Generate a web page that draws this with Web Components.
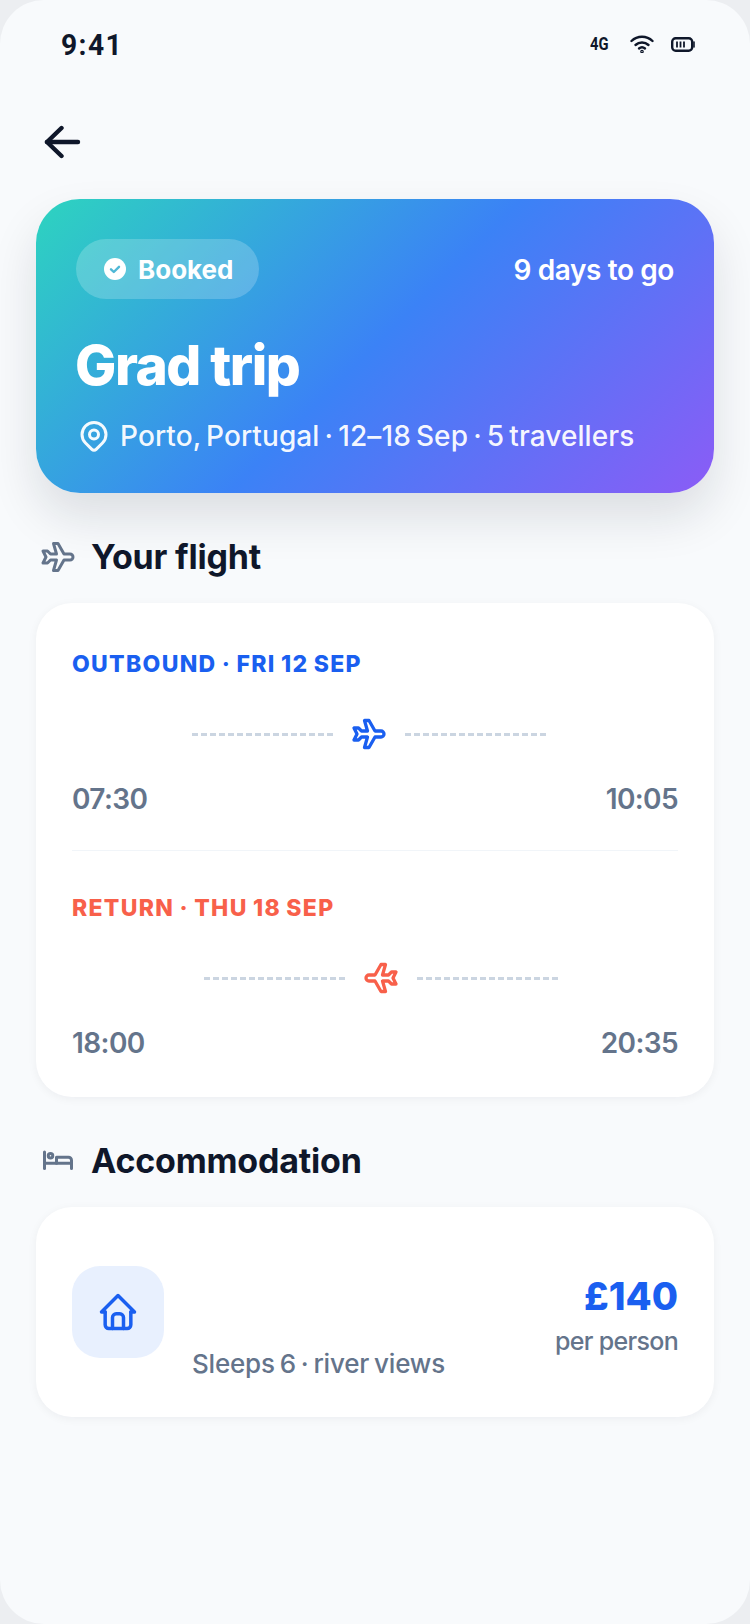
<!DOCTYPE html>
<html lang="en">
<head>
<meta charset="utf-8">
<title>Grad trip</title>
<style>
  html, body { margin: 0; padding: 0; background: #eceef1; }
  body { font-family: Inter, "Liberation Sans", sans-serif; }
</style>
</head>
<body>
<trip-screen>
  <status-bar></status-bar>
  <back-row></back-row>
  <trip-hero status="Booked" countdown="9 days to go" name="Grad trip" meta="Porto, Portugal · 12–18 Sep · 5 travellers"></trip-hero>
  <section-title icon="plane">Your flight</section-title>
  <flight-card>
    <flight-leg tone="out" label="OUTBOUND · FRI 12 SEP" dep="07:30" arr="10:05"></flight-leg>
    <flight-leg tone="ret" label="RETURN · THU 18 SEP" dep="18:00" arr="20:35"></flight-leg>
  </flight-card>
  <section-title icon="bed">Accommodation</section-title>
  <stay-card detail="Sleeps 6 · river views" price="£140" unit="per person"></stay-card>
</trip-screen>

<script>
const ICONS = {
  plane: '<path d="M16 10h4a2 2 0 0 1 0 4h-4l-4 7h-3l2 -7h-4l-2 2h-3l2 -4l-2 -4h3l2 2h4l-2 -7h3z"/>',
  bed: '<path d="M3 6v11"/><path d="M3 13.500h18"/><path d="M21 17v-5.500a2 2 0 0 0 -2 -2h-8v4"/><circle cx="7" cy="8.500" r="1.500"/>',
  home: '<path d="M5 12h-2l9 -9l9 9h-2"/><path d="M5 12v7a2 2 0 0 0 2 2h10a2 2 0 0 0 2 -2v-7"/><path d="M9 21v-6a2 2 0 0 1 2 -2h2a2 2 0 0 1 2 2v6"/>',
  pin: '<circle cx="12" cy="11" r="3"/><path d="M17.66 16.66l-4.24 4.24a2 2 0 0 1 -2.83 0l-4.24 -4.24a8 8 0 1 1 11.31 0z"/>',
};

function icon(name, size, stroke) {
  return `<svg width="${size}" height="${size}" viewBox="0 0 24 24" fill="none" stroke="currentColor" stroke-width="${stroke}" stroke-linecap="round" stroke-linejoin="round">${ICONS[name]}</svg>`;
}

class TripScreen extends HTMLElement {
  connectedCallback() {
    if (this.shadowRoot) return;
    this.attachShadow({ mode: 'open' });
    this.shadowRoot.innerHTML = `
      <style>
        :host {
          display: flex; flex-direction: column;
          width: 750px; height: 1624px; box-sizing: border-box;
          padding: 0 36px;
          background: #f8fafc; border-radius: 44px; overflow: hidden;
          color: #0f172a;
        }
      </style>
      <slot></slot>`;
  }
}

class StatusBar extends HTMLElement {
  connectedCallback() {
    if (this.shadowRoot) return;
    this.attachShadow({ mode: 'open' });
    this.shadowRoot.innerHTML = `
      <style>
        :host { display: flex; align-items: center; justify-content: space-between; flex: none; height: 88px; padding: 2px 19px 0 25px; box-sizing: border-box; color: #0f172a; }
        .time { font: 700 30px/1 Roboto, sans-serif; letter-spacing: 1.5px; transform: scaleX(.94); transform-origin: left; }
        .icons { display: flex; align-items: center; margin-top: -2px; }
        .net { font: 700 18px/1 Roboto, sans-serif; display: inline-block; width: 17px; margin-right: 23px; transform: scaleX(.82); transform-origin: left; }
        .wifi { margin-right: 17px; }
        svg { display: block; }
      </style>
      <span class="time">9:41</span>
      <div class="icons">
        <span class="net">4G</span>
        <svg class="wifi" width="24" height="18" viewBox="0 0 24 18" fill="none" stroke="currentColor" stroke-width="2.4" stroke-linecap="round">
          <path d="M1.500 6a15 15 0 0 1 21 0"/><path d="M5.500 10a9.500 9.500 0 0 1 13 0"/><path d="M9 13.500a4.500 4.500 0 0 1 6 0"/><circle cx="12" cy="16.500" r=".6"/>
        </svg>
        <svg width="24" height="15" viewBox="0 0 24 15" fill="none">
          <rect x="1.200" y="1.200" width="20" height="12.600" rx="3.500" stroke="currentColor" stroke-width="2.400"/>
          <path d="M6 4.500v6M9.500 4.500v6M13 4.500v6" stroke="currentColor" stroke-width="1.800"/>
          <path d="M23 5v5" stroke="currentColor" stroke-width="1.600" stroke-linecap="round"/>
        </svg>
      </div>`;
  }
}

class BackRow extends HTMLElement {
  connectedCallback() {
    if (this.shadowRoot) return;
    this.attachShadow({ mode: 'open' });
    this.shadowRoot.innerHTML = `
      <style>
        :host { display: flex; align-items: center; flex: none; height: 56px; margin-top: 26px; padding-left: 8px; color: #0f172a; }
        svg { display: block; }
      </style>
      <svg width="38" height="34" viewBox="0 0 38 34" fill="none" stroke="currentColor" stroke-width="4.400" stroke-linecap="round" stroke-linejoin="round">
        <path d="M34 17H3"/><path d="M17.500 3L3 17l14.500 14"/>
      </svg>`;
  }
}

class TripHero extends HTMLElement {
  connectedCallback() {
    if (this.shadowRoot) return;
    this.attachShadow({ mode: 'open' });
    const a = n => this.getAttribute(n) || '';
    this.shadowRoot.innerHTML = `
      <style>
        :host {
          display: block; box-sizing: border-box; height: 294px; margin-top: 29px; padding: 40px 40px 0;
          border-radius: 44px; color: #fff; flex: none;
          background: linear-gradient(135deg, #2dd4bf 0%, #3b82f6 50%, #8b5cf6 100%);
          box-shadow: 0 24px 48px rgba(15,23,42,.12);
        }
        .top { display: flex; align-items: center; justify-content: space-between; height: 60px; }
        .pill { display: flex; align-items: center; gap: 12px; height: 60px; width: 183px; box-sizing: border-box; padding-left: 28px; border-radius: 30px; background: rgba(255,255,255,.2); font-size: 26px; font-weight: 700; }
        .count { font-size: 28px; font-weight: 600; letter-spacing: -.4px; padding-top: 2px; }
        h1 { margin: 30px 0 0 -1px; font-size: 55px; line-height: 72px; font-weight: 800; letter-spacing: -1.500px; }
        .meta { display: flex; align-items: center; gap: 8px; margin-top: 17px; font-size: 28px; line-height: 36px; font-weight: 500; letter-spacing: .1px; word-spacing: -2.500px; color: rgba(255,255,255,.95); }
        svg { display: block; flex: none; }
      </style>
      <div class="top">
        <span class="pill">
          <svg width="22" height="22" viewBox="0 0 22 22"><circle cx="11" cy="11" r="11" fill="#fff"/><path d="M7 11.300l2.800 2.700 5.200-5.200" fill="none" stroke="#4fb8d6" stroke-width="2.400" stroke-linecap="round" stroke-linejoin="round"/></svg>
          ${a('status')}
        </span>
        <span class="count">${a('countdown')}</span>
      </div>
      <h1>${a('name')}</h1>
      <div class="meta">${icon('pin', 36, 2)}<span>${a('meta')}</span></div>`;
  }
}

class SectionTitle extends HTMLElement {
  connectedCallback() {
    if (this.shadowRoot) return;
    this.attachShadow({ mode: 'open' });
    this.shadowRoot.innerHTML = `
      <style>
        :host { display: flex; align-items: center; gap: 15px; height: 42px; margin: 42px 0 26px; padding-left: 4px; flex: none; font-size: 34px; font-weight: 700; letter-spacing: -.2px; color: #0f172a; }
        .ico { color: #64748b; display: flex; margin-top: 2px; }
      </style>
      <span class="ico">${icon(this.getAttribute('icon'), 36, 2)}</span>
      <slot></slot>`;
  }
}

class FlightCard extends HTMLElement {
  connectedCallback() {
    if (this.shadowRoot) return;
    this.attachShadow({ mode: 'open' });
    this.shadowRoot.innerHTML = `
      <style>
        :host { display: block; box-sizing: border-box; height: 494px; padding: 45px 36px 34px; flex: none; background: #fff; border-radius: 36px; box-shadow: 0 2px 10px rgba(15,23,42,.05); }
        ::slotted(flight-leg:first-child) { padding-bottom: 31px; border-bottom: 1px solid #f1f5f9; }
        ::slotted(flight-leg:last-child) { padding-top: 41px; }
      </style>
      <slot></slot>`;
  }
}

class FlightLeg extends HTMLElement {
  connectedCallback() {
    if (this.shadowRoot) return;
    this.attachShadow({ mode: 'open' });
    const a = n => this.getAttribute(n) || '';
    const ret = a('tone') === 'ret';
    this.shadowRoot.innerHTML = `
      <style>
        :host { display: block; --tone: ${ret ? '#f8604a' : '#1a5ff0'}; }
        .label { font-size: 23px; line-height: 32px; font-weight: 800; letter-spacing: 1.300px; word-spacing: -1px; color: var(--tone); }
        .route { display: flex; align-items: center; justify-content: center; gap: 18px; height: 40px; margin-top: 34px; color: var(--tone); ${ret ? 'padding-left: 12px' : 'padding-right: 12px'}; }
        .dash { width: 141px; height: 3px; background: repeating-linear-gradient(90deg, #cbd5e1 0 6px, transparent 6px 9px); }
        svg { display: block; ${ret ? 'transform: scaleX(-1);' : ''} }
        .times { display: flex; justify-content: space-between; margin-top: 25px; font-size: 28px; line-height: 40px; font-weight: 600; letter-spacing: -.6px; color: #64748b; }
      </style>
      <div class="label">${a('label')}</div>
      <div class="route"><span class="dash"></span>${icon('plane', 36, 2.2)}<span class="dash"></span></div>
      <div class="times"><span>${a('dep')}</span><span>${a('arr')}</span></div>`;
  }
}

class StayCard extends HTMLElement {
  connectedCallback() {
    if (this.shadowRoot) return;
    this.attachShadow({ mode: 'open' });
    const a = n => this.getAttribute(n) || '';
    this.shadowRoot.innerHTML = `
      <style>
        :host { display: flex; align-items: center; gap: 28px; box-sizing: border-box; height: 210px; padding: 36px 36px 37px; flex: none; background: #fff; border-radius: 36px; box-shadow: 0 2px 10px rgba(15,23,42,.05); }
        .tile { flex: none; display: flex; align-items: center; justify-content: center; width: 92px; height: 92px; border-radius: 28px; background: #e8f0fe; color: #1a5ff0; }
        .mid { flex: 1; align-self: stretch; display: flex; flex-direction: column; justify-content: flex-end; font-size: 26px; line-height: 32px; font-weight: 500; letter-spacing: -.2px; word-spacing: -1.800px; color: #64748b; }
        .right { text-align: right; margin-top: 5px; }
        .price { font-size: 38px; line-height: 48px; font-weight: 800; color: #1a5ff0; }
        .unit { font-size: 25px; line-height: 32px; margin-top: 5px; font-weight: 500; color: #64748b; letter-spacing: -.7px; }
      </style>
      <div class="tile">${icon('home', 44, 1.9)}</div>
      <div class="mid">${a('detail')}</div>
      <div class="right"><div class="price">${a('price')}</div><div class="unit">${a('unit')}</div></div>`;
  }
}

customElements.define('trip-screen', TripScreen);
customElements.define('status-bar', StatusBar);
customElements.define('back-row', BackRow);
customElements.define('trip-hero', TripHero);
customElements.define('section-title', SectionTitle);
customElements.define('flight-card', FlightCard);
customElements.define('flight-leg', FlightLeg);
customElements.define('stay-card', StayCard);
</script>
</body>
</html>
